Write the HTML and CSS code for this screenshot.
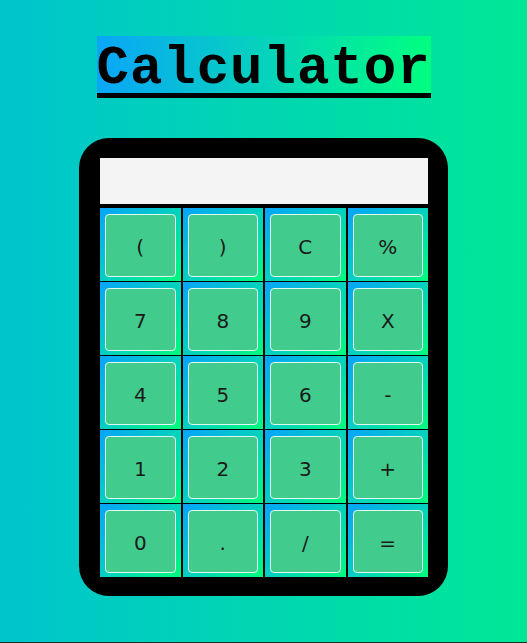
FILE: index.html
```html
<!DOCTYPE html>
<html>
<head>
<meta charset="utf-8">
<link rel="stylesheet" href="styles.css">
</head>
<body>
<div class="page">
  <h1 class="title">Calculator</h1>
  <div class="calc">
    <div class="display"></div>
    <div class="keys">
      <div class="cell"><button class="key">(</button></div>
      <div class="cell"><button class="key">)</button></div>
      <div class="cell"><button class="key">C</button></div>
      <div class="cell"><button class="key">%</button></div>
      <div class="cell"><button class="key">7</button></div>
      <div class="cell"><button class="key">8</button></div>
      <div class="cell"><button class="key">9</button></div>
      <div class="cell"><button class="key">X</button></div>
      <div class="cell"><button class="key">4</button></div>
      <div class="cell"><button class="key">5</button></div>
      <div class="cell"><button class="key">6</button></div>
      <div class="cell"><button class="key">-</button></div>
      <div class="cell"><button class="key">1</button></div>
      <div class="cell"><button class="key">2</button></div>
      <div class="cell"><button class="key">3</button></div>
      <div class="cell"><button class="key">+</button></div>
      <div class="cell"><button class="key">0</button></div>
      <div class="cell"><button class="key">.</button></div>
      <div class="cell"><button class="key">/</button></div>
      <div class="cell"><button class="key">=</button></div>
    </div>
  </div>
</div>
</body>
</html>
```
FILE: styles.css
```css
html {
  background: #1b3326;
  margin: 0;
  padding: 0;
}
body {
  margin: 0;
  height: 642px;
  background: linear-gradient(to right, #00c5cd, #00e796);
  overflow: hidden;
}
.page {
  display: flex;
  flex-direction: column;
  align-items: center;
  padding-top: 36px;
}
.title {
  margin: 0;
  box-sizing: border-box;
  width: 334px;
  height: 62px;
  padding-top: 6px;
  text-align: center;
  font-family: "Courier New", "Nimbus Mono PS", "FreeMono", "Liberation Mono", monospace;
  font-weight: bold;
  font-size: 54px;
  letter-spacing: 1px;
  line-height: 54px;
  color: #000;
  background: linear-gradient(to right, #0aa6f8, #00ff80);
  border-bottom: 5px solid #000;
}
.calc {
  margin-top: 40px;
  width: 328px;
  padding: 20px 20px 19px 21px;
  background: #000;
  border-radius: 30px;
  display: flex;
  flex-direction: column;
  gap: 4px;
}
.display {
  height: 46px;
  background: #f4f4f4;
}
.keys {
  display: grid;
  grid-template-columns: repeat(4, 1fr);
  grid-auto-rows: 73px;
  column-gap: 2px;
  row-gap: 1px;
}
.cell {
  background: linear-gradient(135deg, #06a4fa 0%, #04d0c0 50%, #00fb7c 100%);
  padding: 6px 5px 4px 5px;
  display: flex;
}
.key {
  flex: 1;
  margin: 0;
  padding: 3px 0 0 0;
  background: #41cc8d;
  border: 1px solid #e2f7ee;
  border-radius: 4px;
  font-family: "DejaVu Sans", sans-serif;
  font-size: 20px;
  color: #1a1a1a;
}
```
